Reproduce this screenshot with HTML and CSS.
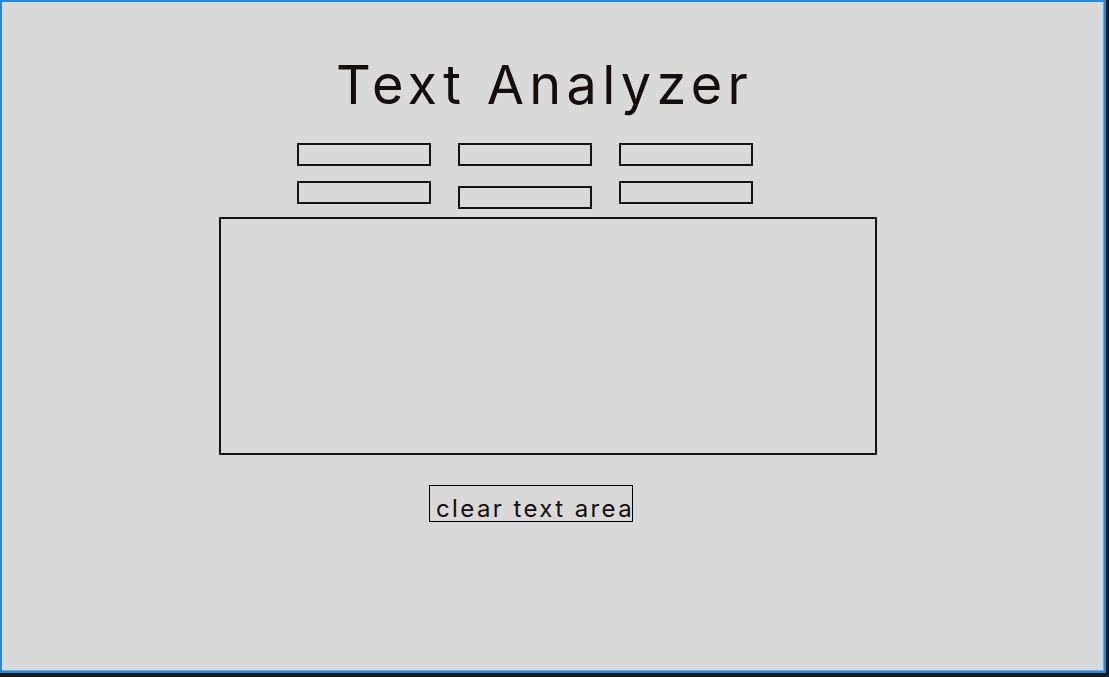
FILE: index.html
```html
<!DOCTYPE html>
<html lang="en">
<head>
<meta charset="utf-8">
<title>Text Analyzer</title>
<link rel="stylesheet" href="styles.css">
</head>
<body>
<div class="frame">
  <h1 class="title">Text Analyzer</h1>
  <div class="stats">
    <div class="stat"></div>
    <div class="stat"></div>
    <div class="stat"></div>
    <div class="stat"></div>
    <div class="stat stat-low"></div>
    <div class="stat"></div>
  </div>
  <textarea class="input"></textarea>
  <button class="clear">clear text area</button>
</div>
</body>
</html>
```
FILE: styles.css
```css
html, body {
  margin: 0;
  padding: 0;
  background: #1b1b1b;
}

body {
  width: 1109px;
  height: 677px;
  overflow: hidden;
  font-family: Inter, "Liberation Sans", sans-serif;
  color: #160d0d;
}

.frame {
  box-sizing: border-box;
  width: 1106px;
  height: 673px;
  background: #d9d9d9;
  border: 2px solid #1c8ae3;
  box-shadow: inset -1px -1px 0 #62aee8;
  display: flex;
  flex-direction: column;
  align-items: flex-start;
  padding-top: 50px;
}

.title {
  margin: 0 0 0 334px;
  font-size: 54px;
  font-weight: 400;
  letter-spacing: 5.3px;
  line-height: normal;
}

.stats {
  margin: 26px 0 0 295px;
  display: grid;
  grid-template-columns: repeat(3, 134px);
  column-gap: 27px;
  row-gap: 15px;
  align-items: start;
}

.stat {
  box-sizing: border-box;
  height: 23px;
  border: 2px solid #141414;
}

.stat-low {
  margin-top: 5px;
}

.input {
  box-sizing: border-box;
  display: block;
  margin: 8px 0 0 217px;
  width: 658px;
  height: 238px;
  border: 2px solid #141414;
  background: transparent;
  resize: none;
  outline: none;
  padding: 4px;
}

.clear {
  box-sizing: border-box;
  margin: 30px 0 0 427px;
  width: 204px;
  height: 37px;
  padding: 8px 0 0 6px;
  border: 1.5px solid #000;
  background: transparent;
  font-family: Inter, "Liberation Sans", sans-serif;
  font-size: 24px;
  letter-spacing: 0.1em;
  line-height: 29px;
  color: #160d0d;
  text-align: left;
  white-space: nowrap;
  overflow: visible;
  display: flex;
  align-items: flex-start;
}
```
